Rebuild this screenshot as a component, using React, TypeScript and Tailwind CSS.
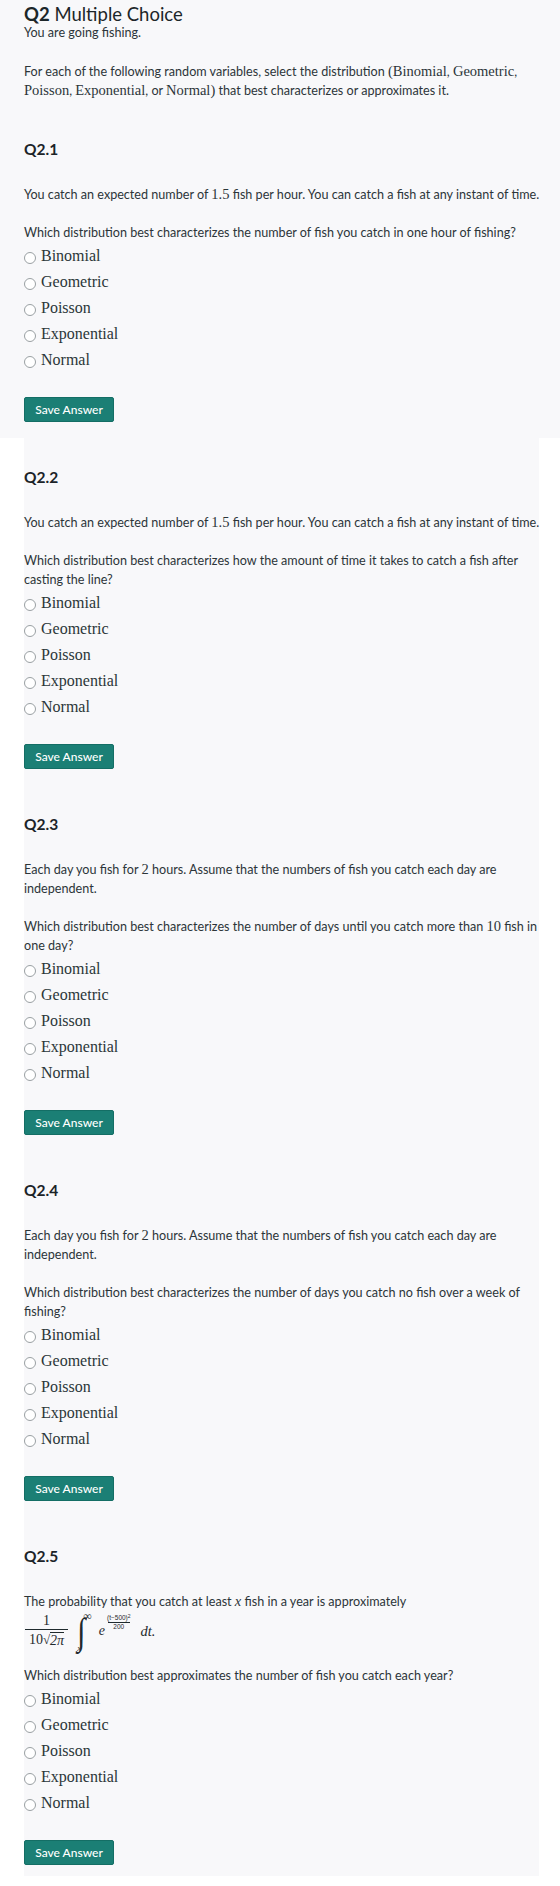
import type { ReactNode } from 'react'

const OPTIONS = ['Binomial', 'Geometric', 'Poisson', 'Exponential', 'Normal']

function M({ children, className = '' }: { children: ReactNode; className?: string }) {
  return <span className={`font-['Liberation_Serif',serif] text-[14.5px] ${className}`}>{children}</span>
}

function Question({ id, prompt, children }: { id: string; prompt: ReactNode; children: ReactNode }) {
  return (
    <section className="w-[526px]">
      <h2 className="text-[15.5px] font-bold leading-[20px] text-[#1c2428]">{id}</h2>
      <div className="mt-[26px]">{children}</div>
      <p className="mt-[19px]">{prompt}</p>
      <ul className="mt-[1px]">
        {OPTIONS.map((o) => (
          <li key={o} className="flex h-[26px] items-center gap-[5px]">
            <span className="mt-[3px] h-[12px] w-[12px] shrink-0 rounded-full border-[1.5px] border-[#9aa0a3] bg-white" />
            <span className="font-['Liberation_Serif',serif] text-[16px] leading-[26px] text-[#2b3638]">{o}</span>
          </li>
        ))}
      </ul>
      <button
        type="button"
        className="mt-[24px] block h-[25px] w-[90px] rounded-[2px] border border-[#146e65] bg-[#1b7f75] text-[12px] font-medium leading-[23px] text-white"
      >
        Save Answer
      </button>
    </section>
  )
}

const catchRate = (
  <p>
    You catch an expected number of <M>1.5</M> fish per hour. You can catch a fish at any instant of time.
  </p>
)

const eachDay = (
  <p>
    Each day you fish for <M>2</M> hours. Assume that the numbers of fish you catch each day are independent.
  </p>
)

function Formula() {
  return (
    <div className="flex h-[42px] items-start pl-[1px] font-['Liberation_Serif',serif] text-[#1f2a2d]">
      <span className="mt-[2px] inline-flex flex-col items-center">
        <span className="text-[14px] leading-[16px]">1</span>
        <span className="h-px w-[43px] bg-[#1f2a2d]" />
        <span className="mt-[2px] flex text-[14px] leading-[16px]">
          10
          <span className="text-[13px]">√</span>
          <span className="border-t border-[#1f2a2d] italic">2π</span>
        </span>
      </span>
      <span className="ml-[9px] flex">
        <span className="mt-[-2px] origin-top scale-y-[1.25] text-[30px] italic leading-[36px]">∫</span>
        <span className="flex h-[42px] flex-col justify-between">
          <span className="ml-[-2px] text-[12px] leading-[10px]">∞</span>
          <span className="ml-[-8px] text-[9px] italic leading-[9px]">x</span>
        </span>
      </span>
      <span className="ml-[7px] mt-[12px] text-[14px] italic leading-[16px]">e</span>
      <span className="ml-[2px] mt-[3px] inline-flex flex-col items-center font-['Liberation_Sans',sans-serif]">
        <span className="text-[6.5px] leading-[8px]">
          (t−500)<sup className="text-[5px]">2</sup>
        </span>
        <span className="h-[0.5px] w-[22px] bg-[#1f2a2d]" />
        <span className="text-[6.5px] leading-[8px]">200</span>
      </span>
      <span className="ml-[10px] mt-[12px] text-[14.5px] italic leading-[16px]">dt.</span>
    </div>
  )
}

export default function App() {
  return (
    <div className="min-h-[1886px] bg-white font-['Lato',sans-serif] text-[12.6px] leading-[19px] text-[#2c3539]">
      <div className="bg-[#f8f8fa] pb-[16px] pl-[24px] pt-[3px]">
        <h1 className="text-[18.5px] leading-[22px] text-[#1c2629]">
          <span className="font-bold">Q2</span> Multiple Choice
        </h1>
        <p className="leading-[16px]">You are going fishing.</p>
        <p className="mt-[21px] w-[526px]">
          For each of the following random variables, select the distribution <M>(Binomial</M>, <M>Geometric</M>,{' '}
          <M>Poisson</M>, <M>Exponential</M>, or <M>Normal)</M> that best characterizes or approximates it.
        </p>
        <div className="mt-[39px]">
          <Question id="Q2.1" prompt="Which distribution best characterizes the number of fish you catch in one hour of fishing?">
            {catchRate}
          </Question>
        </div>
      </div>

      <div className="ml-[24px] flex w-[515px] flex-col gap-[45px] bg-[#f8f8fa] pb-[11px] pt-[29px]">
        <Question
          id="Q2.2"
          prompt="Which distribution best characterizes how the amount of time it takes to catch a fish after casting the line?"
        >
          {catchRate}
        </Question>
        <Question
          id="Q2.3"
          prompt={
            <>
              Which distribution best characterizes the number of days until you catch more than <M>10</M> fish in one
              day?
            </>
          }
        >
          {eachDay}
        </Question>
        <Question id="Q2.4" prompt="Which distribution best characterizes the number of days you catch no fish over a week of fishing?">
          {eachDay}
        </Question>
        <Question id="Q2.5" prompt="Which distribution best approximates the number of fish you catch each year?">
          <div className="mb-[-6px]">
            <p>
              The probability that you catch at least <M className="italic">x</M> fish in a year is approximately
            </p>
            <Formula />
          </div>
        </Question>
      </div>
    </div>
  )
}
